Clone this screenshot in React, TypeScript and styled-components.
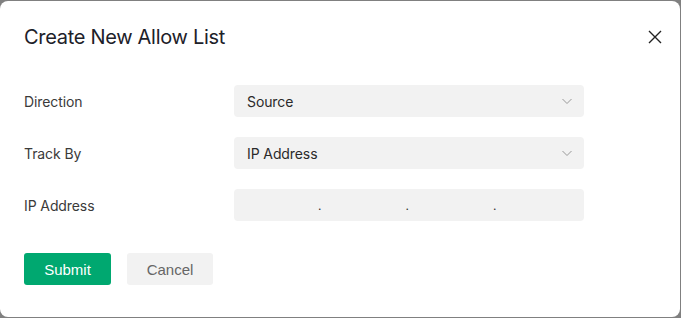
import React from "react";
import styled, { createGlobalStyle } from "styled-components";

const Global = createGlobalStyle`
  html, body { margin: 0; padding: 0; background: #808080; }
  body { font-family: Inter, "Noto Sans", sans-serif; }
  * { box-sizing: border-box; }
`;

const Page = styled.div`
  width: 681px;
  height: 318px;
  padding: 1px 1px 1px 0;
  display: flex;
`;

const Dialog = styled.div`
  flex: 1;
  background: #fff;
  border-radius: 8px;
  padding: 23px 24px 0 24px;
  display: flex;
  flex-direction: column;
`;

const Header = styled.div`
  display: flex;
  align-items: center;
  justify-content: space-between;
  height: 26px;
`;

const Title = styled.h1`
  margin: 0;
  font-size: 20px;
  font-weight: 400;
  color: #1d2129;
  letter-spacing: -0.3px;
`;

const Close = styled.button`
  border: 0;
  background: none;
  padding: 0;
  margin-right: -9px;
  width: 20px;
  height: 20px;
  display: flex;
  align-items: center;
  justify-content: center;
  color: #1d2129;
`;

const Form = styled.div`
  margin-top: 35px;
  display: flex;
  flex-direction: column;
  gap: 20px;
`;

const Row = styled.div`
  display: grid;
  grid-template-columns: 210px 350px;
  align-items: center;
  height: 32px;
`;

const Label = styled.span`
  font-size: 14px;
  color: #3a3a3a;
  letter-spacing: -0.1px;
`;

const Field = styled.div`
  height: 32px;
  background: #f2f2f2;
  border-radius: 4px;
  display: flex;
  align-items: center;
  justify-content: space-between;
  padding: 0 11px 0 13px;
  font-size: 14px;
  color: #2a2a2a;
  letter-spacing: -0.1px;
`;

const IpField = styled.div`
  height: 32px;
  background: #f2f2f2;
  border-radius: 4px;
  display: grid;
  grid-template-columns: repeat(4, 1fr);
`;

const IpSeg = styled.div<{ $dot: boolean }>`
  position: relative;
  &::after {
    content: ${(p) => (p.$dot ? '"."' : '""')};
    position: absolute;
    right: 0px;
    top: 9px;
    font-size: 12px;
    color: #333;
  }
`;

const Actions = styled.div`
  margin-top: 32px;
  display: flex;
  gap: 16px;
`;

const Btn = styled.button<{ $primary?: boolean }>`
  height: 32px;
  border: 0;
  border-radius: 3px;
  font-family: "Liberation Sans", Arial, sans-serif;
  font-size: 15px;
  font-weight: 400;
  width: ${(p) => (p.$primary ? "87px" : "86px")};
  background: ${(p) => (p.$primary ? "#00a870" : "#f2f2f2")};
  color: ${(p) => (p.$primary ? "#ffffff" : "#666666")};
  padding: 0;
`;

const Chevron = () => (
  <svg width="12" height="12" viewBox="0 0 12 12" fill="none">
    <path d="M1.5 4l4.5 4.5L10.5 4" stroke="#999" strokeWidth="1" />
  </svg>
);

export default function App() {
  return (
    <>
      <Global />
      <Page>
        <Dialog>
          <Header>
            <Title>Create New Allow List</Title>
            <Close aria-label="close">
              <svg width="16" height="16" viewBox="0 0 16 16" fill="none">
                <path d="M2 2l12 12M14 2L2 14" stroke="#222" strokeWidth="1.4" />
              </svg>
            </Close>
          </Header>
          <Form>
            <Row>
              <Label>Direction</Label>
              <Field>
                <span>Source</span>
                <Chevron />
              </Field>
            </Row>
            <Row>
              <Label>Track By</Label>
              <Field>
                <span>IP Address</span>
                <Chevron />
              </Field>
            </Row>
            <Row>
              <Label>IP Address</Label>
              <IpField>
                {[0, 1, 2, 3].map((i) => (
                  <IpSeg key={i} $dot={i < 3} />
                ))}
              </IpField>
            </Row>
          </Form>
          <Actions>
            <Btn $primary>Submit</Btn>
            <Btn>Cancel</Btn>
          </Actions>
        </Dialog>
      </Page>
    </>
  );
}
